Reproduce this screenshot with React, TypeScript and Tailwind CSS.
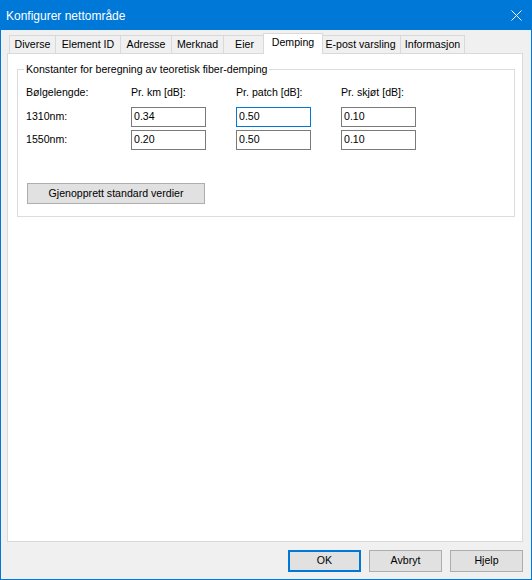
import React from 'react'

const tabs = [
  { label: 'Diverse', w: 'w-[47px]', ml: '' },
  { label: 'Element ID', w: 'w-[66px]', ml: '-ml-px' },
  { label: 'Adresse', w: 'w-[52px]', ml: '-ml-px' },
  { label: 'Merknad', w: 'w-[53px]', ml: '-ml-px' },
  { label: 'Eier', w: 'w-[43px]', ml: '-ml-px' },
  { label: 'Demping', w: 'w-[60px]', ml: '-ml-[3px]', active: true },
  { label: 'E-post varsling', w: 'w-[81px]', ml: '-ml-[3px]' },
  { label: 'Informasjon', w: 'w-[65px]', ml: '-ml-px' },
]

const rows = [
  { label: '1310nm:', values: ['0.34', '0.50', '0.10'], focus: 1 },
  { label: '1550nm:', values: ['0.20', '0.50', '0.10'], focus: -1 },
]

function Field({ value, focused }: { value: string; focused?: boolean }) {
  return (
    <div
      className={
        'w-[75px] h-[20px] bg-white flex items-center pl-[2px] border ' +
        (focused ? 'border-[#0078d7]' : 'border-[#7a7a7a]')
      }
    >
      {value}
    </div>
  )
}

function DialogButton({ label, primary }: { label: string; primary?: boolean }) {
  return (
    <button
      className={
        'w-[73px] h-[22px] bg-[#e1e1e1] flex items-center justify-center ' +
        (primary ? 'border-2 border-[#0078d7]' : 'border border-[#adadad]')
      }
    >
      {label}
    </button>
  )
}

export default function App() {
  return (
    <div
      className="w-[532px] h-[580px] flex flex-col bg-[#f0f0f0] border border-[#0078d7] text-[10.6px] text-black overflow-hidden"
      style={{ fontFamily: '"Liberation Sans", Arial, sans-serif' }}
    >
      {/* tittellinje */}
      <div className="h-[30px] shrink-0 bg-[#0078d7] flex items-center justify-between pl-[5px] pr-[9px] text-white text-[12px] -mt-px">
        <span className="pt-px">Konfigurer nettområde</span>
        <svg width="11" height="11" viewBox="0 0 11 11" className="mt-[1px]">
          <path d="M0.5 0.5 L10.5 10.5 M10.5 0.5 L0.5 10.5" stroke="white" strokeWidth="1" fill="none" />
        </svg>
      </div>

      <div className="flex-1 flex flex-col pt-[3px] pl-[6px] pr-[8px]">
        {/* faner */}
        <div className="h-[20px] flex items-end pl-[2px] shrink-0">
          {tabs.map((t) => (
            <div
              key={t.label}
              className={
                t.w +
                ' ' +
                t.ml +
                ' flex items-center justify-center border border-b-0 border-[#d9d9d9] ' +
                (t.active
                  ? 'h-[21px] -mb-px bg-white relative z-10 pb-[2px]'
                  : 'h-[18px] bg-[#f0f0f0]')
              }
            >
              {t.label}
            </div>
          ))}
        </div>

        {/* fanepanel */}
        <div className="flex-1 bg-white border border-[#d9d9d9] pt-[15px] pl-[9px]">
          <div className="relative w-[498px] h-[148px] border border-[#dcdcdc] pt-[15px] pl-[8px]">
            <span className="absolute -top-[8px] left-[6px] px-[2px] bg-white leading-[14px]">
              Konstanter for beregning av teoretisk fiber-demping
            </span>

            <div className="grid grid-cols-[105px_105px_105px_105px] h-[14px] items-center">
              <span>Bølgelengde:</span>
              <span>Pr. km [dB]:</span>
              <span>Pr. patch [dB]:</span>
              <span>Pr. skjøt [dB]:</span>
            </div>

            <div className="flex flex-col gap-[3px] mt-[8px]">
              {rows.map((r) => (
                <div key={r.label} className="grid grid-cols-[105px_105px_105px_105px] items-center">
                  <span>{r.label}</span>
                  {r.values.map((v, i) => (
                    <Field key={i} value={v} focused={i === r.focus} />
                  ))}
                </div>
              ))}
            </div>

            <button className="mt-[33px] ml-px w-[178px] h-[21px] bg-[#e1e1e1] border border-[#adadad] flex items-center justify-center">
              Gjenopprett standard verdier
            </button>
          </div>
        </div>

        {/* knapper */}
        <div className="h-[37px] shrink-0 flex justify-end items-start pt-[8px] gap-[8px] pr-[-1px]">
          <DialogButton label="OK" primary />
          <DialogButton label="Avbryt" />
          <DialogButton label="Hjelp" />
        </div>
      </div>
    </div>
  )
}
